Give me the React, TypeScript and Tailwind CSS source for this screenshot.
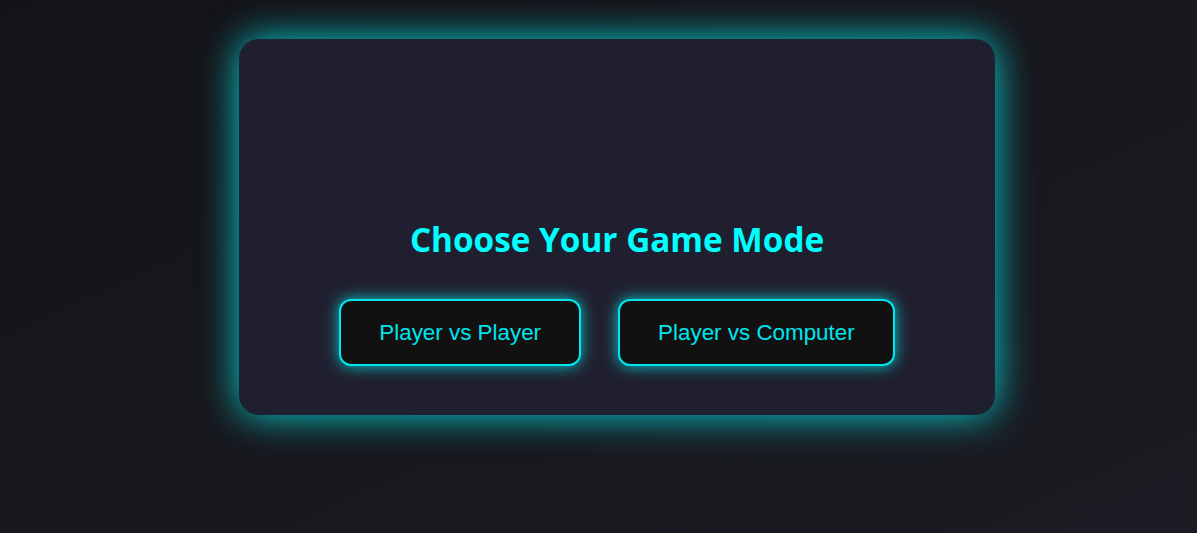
export default function App() {
  return (
    <div className="min-h-[533px] w-full bg-gradient-to-br from-[#131318] via-[#17171d] to-[#1b1b23] pt-[39px] pl-[37px]">
      <div className="mx-auto flex h-[376px] w-[756px] flex-col items-center rounded-[20px] bg-[#201f2f] pt-[176px] shadow-[0_0_38px_rgba(0,245,245,0.85)]">
        <h1
          className="text-[33.3px] font-bold leading-[48px] text-[#00ffff]"
          style={{ fontFamily: '"Open Sans", "Noto Sans", sans-serif' }}
        >
          Choose Your Game Mode
        </h1>
        <div className="mt-[36px] flex gap-[37px]">
          <ModeButton label="Player vs Player" />
          <ModeButton label="Player vs Computer" />
        </div>
      </div>
    </div>
  );
}

function ModeButton({ label }: { label: string }) {
  return (
    <button
      className="rounded-[12px] border-2 border-[#00e5ee] bg-[#111111] px-[38px] py-[18px] text-[22.4px] leading-[27px] text-[#00e5ee] shadow-[0_0_15px_rgba(0,245,245,0.8)]"
      style={{ fontFamily: '"Liberation Sans", Arial, sans-serif' }}
    >
      {label}
    </button>
  );
}
